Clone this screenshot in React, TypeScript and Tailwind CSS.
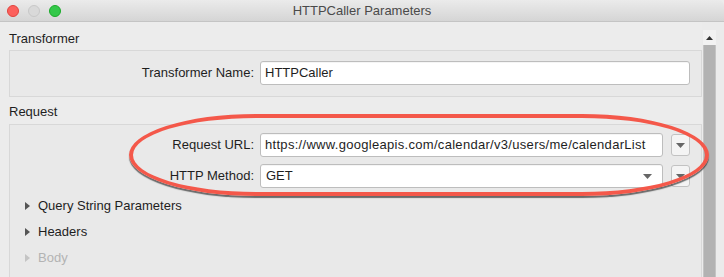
export default function App() {
  return (
    <div className="relative h-[277px] w-[724px] overflow-hidden bg-[#ececec] font-['Liberation_Sans',sans-serif] text-[13px] text-[#1e1e1e]">
      <TitleBar />
      <div className="flex h-[255px]">
        <div className="flex-1 pl-[9px]">
          <div className="mt-[8px] flex h-[18px] items-center">Transformer</div>
          <div className="mt-[2px] h-[47px] border border-[#d8d8d8] bg-[#e9e9e9] pt-[10px] pr-[11px]">
            <Field label="Transformer Name:" value="HTTPCaller" />
          </div>
          <div className="mt-[6px] flex h-[18px] items-center">Request</div>
          <div className="mt-[3px] h-[200px] border border-[#d8d8d8] bg-[#e9e9e9] pt-[8px] pr-[11px]">
            <Field
              label="Request URL:"
              value="https://www.googleapis.com/calendar/v3/users/me/calendarList"
              button
              wide
            />
            <div className="mt-[7px]">
              <Field label="HTTP Method:" value="GET" button select />
            </div>
            <div className="mt-[5px] flex flex-col">
              <Disclosure label="Query String Parameters" />
              <Disclosure label="Headers" />
              <Disclosure label="Body" muted />
            </div>
          </div>
        </div>
        <Scrollbar />
      </div>
      <div className="pointer-events-none absolute left-[129px] top-[114px] h-[82px] w-[580px] rounded-[130px/42px] border-[4px] border-[#f4584a] shadow-[0_2px_1px_rgba(0,0,0,0.55)]" />
    </div>
  );
}

function TitleBar() {
  return (
    <div className="relative flex h-[22px] items-center justify-center rounded-tr-[6px] border-b border-[#c4c4c4] bg-gradient-to-b from-[#ebebeb] to-[#d5d5d5]">
      <div className="absolute left-[7px] top-[5px] flex gap-[9px]">
        <span className="h-[12px] w-[12px] rounded-full border border-[#e0443e] bg-[#fc605c]" />
        <span className="h-[12px] w-[12px] rounded-full border border-[#c8c8c8] bg-[#d9d9d9]" />
        <span className="h-[12px] w-[12px] rounded-full border border-[#1aab29] bg-[#34c84a]" />
      </div>
      <span className="text-[13px] text-[#4a4a4a]">HTTPCaller Parameters</span>
    </div>
  );
}

function Field({
  label,
  value,
  button,
  select,
  wide,
}: {
  label: string;
  value: string;
  button?: boolean;
  select?: boolean;
  wide?: boolean;
}) {
  return (
    <div className="flex items-center">
      <div className="w-[244px] text-right">{label}</div>
      <div className="ml-[6px] flex h-[24px] flex-1 items-center justify-between rounded-[3px] border border-[#bdbdbd] bg-white px-[4px] shadow-[inset_0_1px_0_rgba(0,0,0,0.04)]">
        <span className={wide ? "tracking-[0.3px]" : select ? "pl-[1px]" : ""}>{value}</span>
        {select && <Caret className="mr-[6px]" />}
      </div>
      {button && (
        <div className="ml-[8px] flex h-[22px] w-[19px] items-center justify-center rounded-[3px] border border-[#c2c2c2] bg-[#f4f4f4]">
          <Caret />
        </div>
      )}
    </div>
  );
}

function Caret({ className = "" }: { className?: string }) {
  return (
    <svg width="9" height="5" viewBox="0 0 9 5" className={className}>
      <path d="M0 0h9L4.5 5z" fill="#666" />
    </svg>
  );
}

function Disclosure({ label, muted }: { label: string; muted?: boolean }) {
  return (
    <div className={`flex h-[26px] items-center pl-[15px] ${muted ? "text-[#b3b3b3]" : ""}`}>
      <svg width="5" height="8" viewBox="0 0 5 8" className="mr-[8px]">
        <path d="M0 0l5 4-5 4z" fill={muted ? "#c4c4c4" : "#555"} />
      </svg>
      {label}
    </div>
  );
}

function Scrollbar() {
  return (
    <div className="flex w-[22px] bg-[#ebebeb]">
      <div className="ml-[1px] flex w-[13px] flex-col">
        <div className="mt-[8px] flex h-[15px] items-center justify-center bg-[#f2f2f2]">
          <svg width="7" height="4" viewBox="0 0 7 4">
            <path d="M3.5 0L7 4H0z" fill="#333" />
          </svg>
        </div>
        <div className="flex-1 border-x border-[#c4c4c4] bg-[#b2b2b2]" />
      </div>
    </div>
  );
}
